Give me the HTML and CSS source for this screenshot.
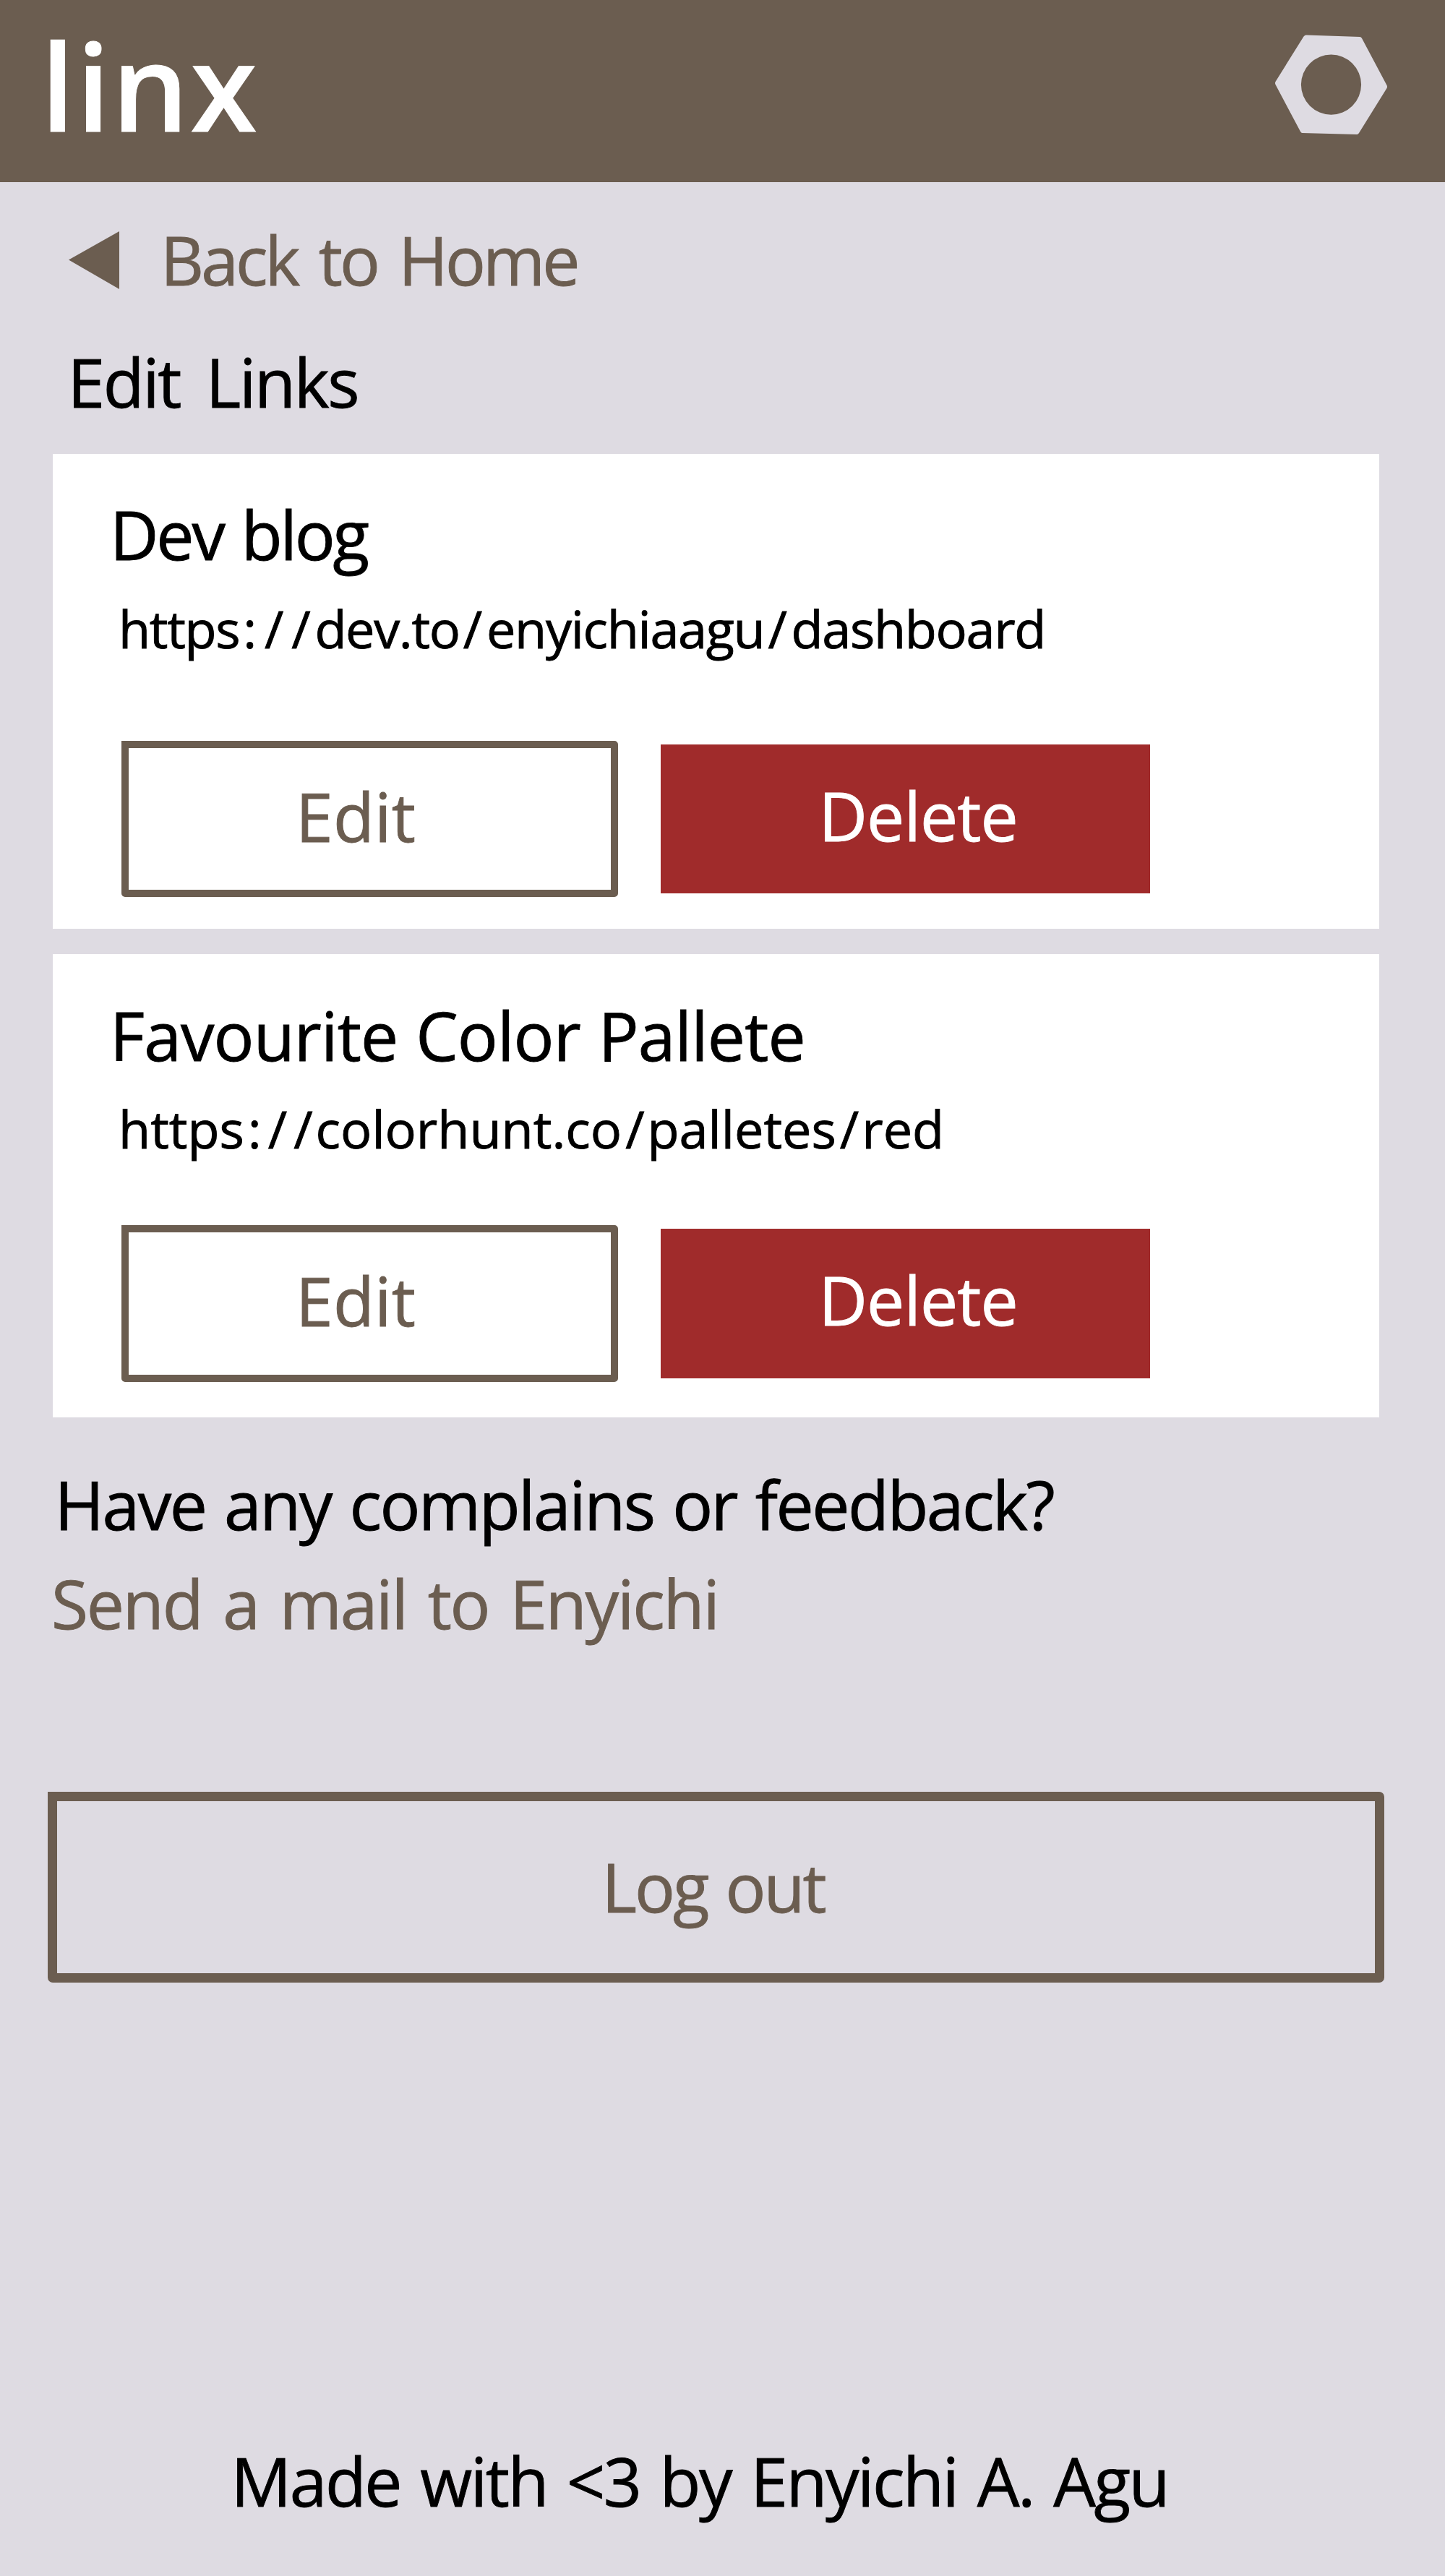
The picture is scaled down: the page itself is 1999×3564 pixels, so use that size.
FILE: index.html
```
<!DOCTYPE html>
<html lang="en">
<head>
<meta charset="utf-8">
<title>linx - Edit Links</title>
<link rel="stylesheet" href="styles.css">
</head>
<body>
<header class="header">
  <div class="logo">linx</div>
  <svg class="settings" viewBox="0 0 156 140" aria-label="Settings">
    <path fill-rule="evenodd" d="M43 0.500L117 3Q119 3 120 5L154.500 70Q155.500 72 154.500 74L116 136Q115 138 113 138L37.500 136Q36 136 35 134L0.500 69Q-0.500 67 0.500 65L39.500 2.500Q41 0.500 43 0.500ZM77.500 27.500a41.600 41.600 0 1 0 0 83.200a41.600 41.600 0 1 0 0-83.200Z"/>
  </svg>
</header>
<main class="main">
  <a class="back">
    <svg class="back-arrow" viewBox="0 0 70 80"><path d="M70 0V80L0 39.500Z"/></svg>
    <span class="back-label">Back to Home</span>
  </a>
  <h1 class="title">Edit Links</h1>

  <section class="card">
    <h2 class="card-name dev">Dev blog</h2>
    <p class="card-url dev-url">https<span class="sep">://</span>dev.to<span class="sep">/</span>enyichiaagu<span class="sep">/</span>dashboard</p>
    <div class="actions">
      <button class="btn edit">Edit</button>
      <button class="btn delete">Delete</button>
    </div>
  </section>

  <section class="card card-compact">
    <h2 class="card-name palette">Favourite Color Pallete</h2>
    <p class="card-url palette-url">https<span class="sep">://</span>colorhunt.co<span class="sep">/</span>palletes<span class="sep">/</span>red</p>
    <div class="actions">
      <button class="btn edit">Edit</button>
      <button class="btn delete">Delete</button>
    </div>
  </section>

  <p class="question">Have any complains or feedback?</p>
  <a class="mail">Send a mail to Enyichi</a>
  <button class="btn logout">Log out</button>
</main>
<footer class="footer">Made with &lt;3 by Enyichi A. Agu</footer>
</body>
</html>
```
FILE: styles.css
```
* { box-sizing: border-box; margin: 0; padding: 0; }

body {
  width: 1999px;
  height: 3564px;
  display: flex;
  flex-direction: column;
  background: #dedbe2;
  color: #000;
  font: 400 93px/100px "Trebuchet MS", "Open Sans", "Noto Sans", sans-serif;
  word-spacing: 4px;
  white-space: nowrap;
  -webkit-text-stroke: 0.900px currentColor;
}

h1, h2 { font-size: inherit; font-weight: inherit; }

.header {
  height: 252.400px;
  display: flex;
  justify-content: space-between;
  align-items: flex-start;
  padding: 38px 79px 0 56.500px;
  background: #6b5d50;
}
.logo {
  color: #fff;
  font-size: 167px;
  font-weight: 600;
  line-height: 160px;
  letter-spacing: 2.600px;
}
.settings { width: 156px; height: 140px; margin-top: 10px; fill: #dedbe2; }

.main {
  flex: 1;
  display: flex;
  flex-direction: column;
  align-items: flex-start;
  padding: 56.600px 0 0 73px;
}

.back { display: flex; align-items: flex-start; gap: 57px; margin-left: 22px; color: #6b5d50; }
.back-arrow { width: 70px; height: 80px; margin-top: 11.500px; fill: #6b5d50; }
.back-label { letter-spacing: -3.900px; word-spacing: 9px; }

.title { margin: 69px 0 50px 20.500px; letter-spacing: -2.400px; word-spacing: 14px; }

.card {
  width: 1834.500px;
  height: 657.500px;
  padding: 61.500px 0 0 79px;
  background: #fff;
}
.card-compact { height: 641px; margin-top: 35px; }

.card-url { margin: 39.500px 0 0 12px; font-size: 72px; line-height: 80px; }
.dev { letter-spacing: -3.160px; }
.palette { letter-spacing: -0.850px; word-spacing: 1.500px; }
.sep { margin: 0 -5px 0 5px; }
.dev-url { letter-spacing: -1.320px; }
.dev-url .sep { letter-spacing: 10.800px; }
.palette-url { letter-spacing: 0; }
.palette-url .sep { letter-spacing: 9px; }

.actions { display: flex; align-items: center; gap: 59px; margin: 116px 0 0 15.500px; }
.card-compact .actions { margin-top: 94px; }

.btn {
  display: block;
  border: 0;
  background: none;
  color: #6b5d50;
  font: inherit;
  word-spacing: inherit;
  text-align: left;
}
.edit {
  width: 687px;
  height: 216.500px;
  padding: 0 0 9px 231.500px;
  border: 10px solid #6b5d50;
  border-radius: 0 5px 5px 5px;
  letter-spacing: 0.200px;
}
.delete {
  width: 677px;
  height: 206.500px;
  padding: 0 0 11px 219px;
  background: #a02b2b;
  color: #fff;
  letter-spacing: -0.900px;
}

.question { margin: 70px 0 0 2.500px; letter-spacing: -2.500px; }
.mail { margin: 37px 0 0 -2px; color: #6b5d50; letter-spacing: -2.200px; word-spacing: 7px; }

.logout {
  width: 1849px;
  height: 264px;
  margin: 210.500px 0 0 -7px;
  padding: 0 0 2px 753.500px;
  border: 13.500px solid #6b5d50;
  border-radius: 0 7px 7px 7px;
  letter-spacing: -3.020px;
}

.footer { padding: 0 0 82px 319.600px; letter-spacing: -2.500px; word-spacing: 5.500px; }
```
